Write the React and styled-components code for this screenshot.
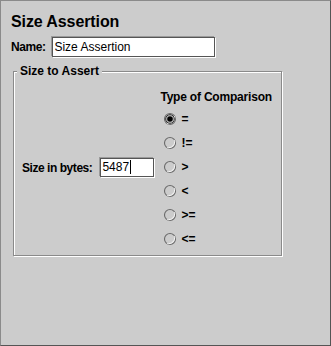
import React from 'react';
import styled, { createGlobalStyle } from 'styled-components';

const GlobalStyle = createGlobalStyle`
  html, body {
    margin: 0;
    padding: 0;
    background: #cccccc;
  }
  * {
    box-sizing: border-box;
  }
`;

// Outer panel with the old-school lowered frame
const Panel = styled.div`
  width: 331px;
  height: 346px;
  background: #cccccc;
  border-top: 1px solid #8a8a8a;
  border-left: 1px solid #8a8a8a;
  border-right: 1px solid #555555;
  border-bottom: 1px solid #555555;
  padding: 11px 0 0 10px;
  font-family: 'Liberation Sans', Arial, sans-serif;
  color: #000;
`;

const Title = styled.div`
  font-size: 16px;
  font-weight: bold;
  line-height: 20px;
  letter-spacing: -0.1px;
`;

const FieldRow = styled.div`
  display: flex;
  align-items: center;
  gap: ${p => p.gap || 5}px;
  margin-top: ${p => p.top || 0}px;
`;

const Label = styled.span`
  font-size: 12px;
  font-weight: bold;
  line-height: 14px;
  letter-spacing: -0.45px;
  white-space: nowrap;
`;

const TextField = styled.div`
  width: ${p => p.width}px;
  height: ${p => p.height}px;
  background: #ffffff;
  border: 1px solid #555555;
  box-shadow: -1px -1px 0 #9a9a9a, 1px 1px 0 #ffffff;
  font-size: 12px;
  line-height: ${p => p.height - 2}px;
  padding-left: 1px;
  white-space: nowrap;
  overflow: hidden;
`;

const Caret = styled.span`
  display: inline-block;
  width: 1px;
  height: 14px;
  background: #000;
  vertical-align: middle;
  margin-left: 1px;
  margin-top: -2px;
`;

// Etched group box
const Group = styled.div`
  position: relative;
  width: 269px;
  height: 185px;
  margin: 14px 0 0 2px;
  border: 1px solid #8a8a8a;
  box-shadow: 1px 1px 0 #ffffff, inset 1px 1px 0 #ffffff;
  display: flex;
  align-items: center;
  gap: 6px;
  padding: 18px 0 3px 8px;
`;

const Legend = styled.span`
  position: absolute;
  top: -8px;
  left: 3px;
  padding: 0 3px;
  background: #cccccc;
  font-size: 12px;
  font-weight: bold;
  line-height: 14px;
`;

const SizeBlock = styled(FieldRow)`
  padding-bottom: 7px;
`;

const Column = styled.div`
  display: flex;
  flex-direction: column;
  align-self: flex-start;
`;

const ColumnTitle = styled(Label)`
  letter-spacing: -0.2px;
  margin-bottom: 3px;
`;

const RadioRow = styled.div`
  height: 24px;
  display: flex;
  align-items: center;
  gap: 4px;
  padding-left: 3px;
`;

const RadioText = styled.span`
  font-size: 12px;
  font-weight: bold;
  line-height: 14px;
`;

const Radio = ({ checked }) => (
  <svg width="14" height="14" viewBox="0 0 14 14">
    <circle cx="7" cy="7" r="5.5" fill="#cccccc" stroke="#6a6a6a" strokeWidth="1.1" />
    <path d="M11.5 4.2 A6 6 0 0 1 4.2 11.5" fill="none" stroke="#ffffff" strokeWidth="0.9" />
    {checked && (
      <>
        <circle cx="7" cy="7" r="4.3" fill="none" stroke="#2a2a2a" strokeWidth="1" />
        <circle cx="7" cy="7" r="2.8" fill="#000" />
      </>
    )}
  </svg>
);

const comparisons = ['=', '!=', '>', '<', '>=', '<='];

const App = () => (
  <>
    <GlobalStyle />
    <Panel>
      <Title>Size Assertion</Title>
      <FieldRow top={5} gap={7}>
        <Label>Name:</Label>
        <TextField width={163} height={20}>Size Assertion</TextField>
      </FieldRow>
      <Group>
        <Legend>Size to Assert</Legend>
        <SizeBlock gap={8}>
          <Label>Size in bytes:</Label>
          <TextField width={54} height={19}>
            5487
            <Caret />
          </TextField>
        </SizeBlock>
        <Column>
          <ColumnTitle>Type of Comparison</ColumnTitle>
          {comparisons.map((c, i) => (
            <RadioRow key={c}>
              <Radio checked={i === 0} />
              <RadioText>{c}</RadioText>
            </RadioRow>
          ))}
        </Column>
      </Group>
    </Panel>
  </>
);

export default App;
